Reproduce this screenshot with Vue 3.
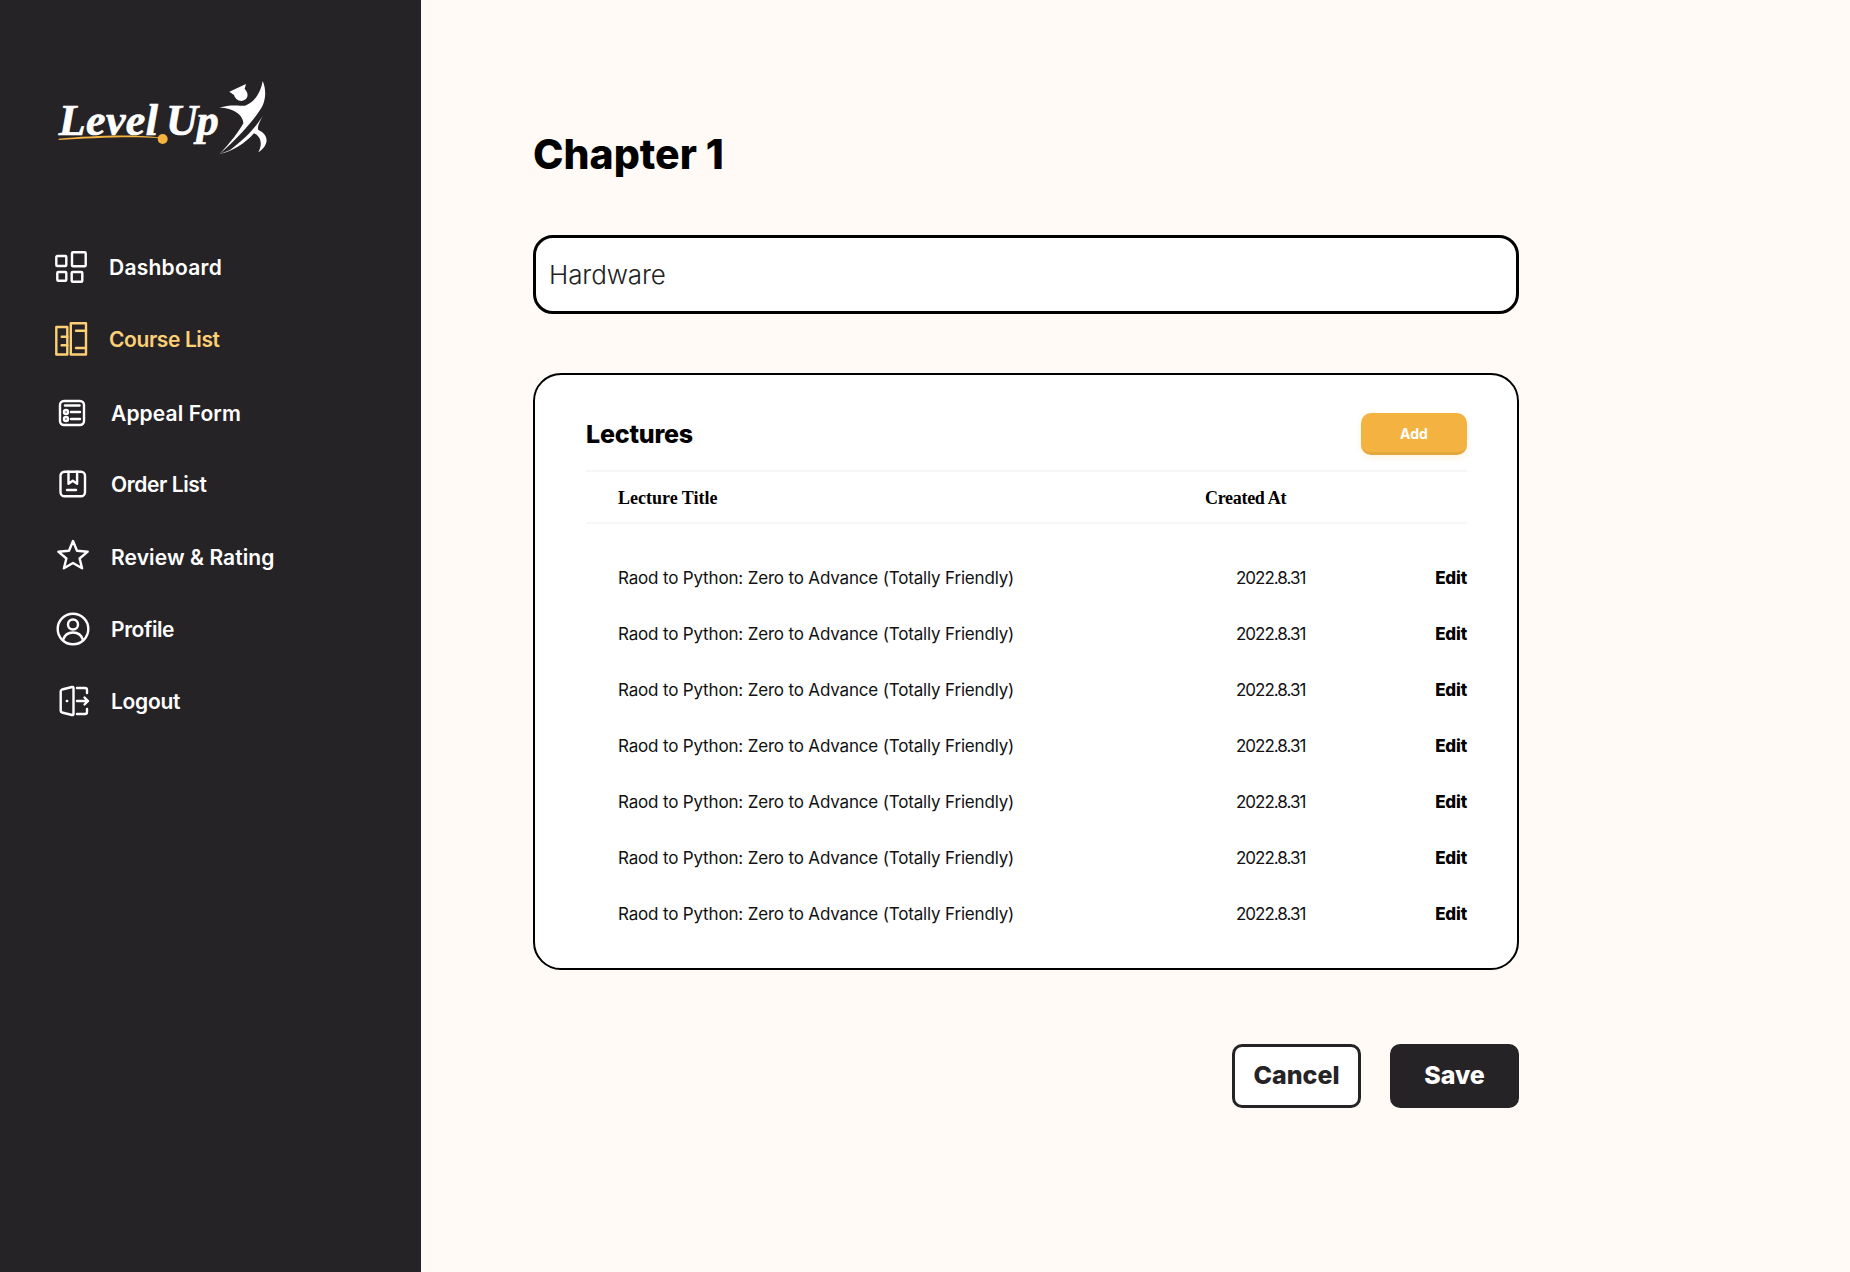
<template>
  <div class="page">
    <aside class="sidebar">
      <svg class="logo" viewBox="0 0 780 360" width="260" height="120">
        <text x="86" y="224" class="logo-text" textLength="298">Level</text>
        <text x="408" y="224" class="logo-text" textLength="158">Up</text>
        <path d="M86 236 C180 228 300 222 385 232 L385 234 C300 228 180 234 86 240 Z" fill="#f4b341" />
        <circle cx="398" cy="237" r="15" fill="#f4b341" />
        <g transform="translate(540 45)" fill="#fff">
          <path d="M58 50 L108 27 L104 42 C118 55 115 75 95 78 C82 78 74 68 72 60 Z" />
          <path d="M28 98 C55 88 85 92 105 92 C130 85 152 55 158 18 C172 50 165 85 150 105 C135 128 100 175 28 238 C60 205 90 165 100 145 C100 120 70 98 28 98 Z" />
          <path d="M158 122 C145 145 120 180 60 225 L28 238 C70 228 105 205 132 175 C150 182 160 205 145 232 C178 210 178 180 145 165 C140 155 150 140 158 122 Z" />
        </g>
      </svg>

      <nav class="nav">
        <a
          v-for="item in navItems"
          :key="item.label"
          class="nav-item"
          :class="{ active: item.active, wide: item.wide }"
          :style="{ marginBottom: item.gap + 'px', letterSpacing: item.track + 'px' }"
        >
          <svg class="nav-icon" viewBox="0 0 36 36" width="36" height="36">
            <path v-for="d in item.paths" :key="d" :d="d" />
          </svg>
          <span>{{ item.label }}</span>
        </a>
      </nav>
    </aside>

    <main class="main">
      <h1>Chapter 1</h1>
      <div class="name-input">Hardware</div>

      <section class="card">
        <div class="card-head">
          <h2>Lectures</h2>
          <button class="add-btn">Add</button>
        </div>
        <div class="table-head">
          <span class="col-title">Lecture Title</span>
          <span class="col-created">Created At</span>
        </div>
        <div class="rows">
          <div v-for="n in 7" :key="n" class="row">
            <span class="col-title">Raod to Python: Zero to Advance (Totally Friendly)</span>
            <span class="col-date">2022.8.31</span>
            <span class="col-edit">Edit</span>
          </div>
        </div>
      </section>

      <div class="actions">
        <button class="cancel-btn">Cancel</button>
        <button class="save-btn">Save</button>
      </div>
    </main>
  </div>
</template>

<script setup>
const navItems = [
  {
    label: 'Dashboard',
    gap: 36,
    track: 0.25,
    paths: [
      'M2.300 7h8a1 1 0 0 1 1 1v8a1 1 0 0 1-1 1h-8a1 1 0 0 1-1-1v-8a1 1 0 0 1 1-1z',
      'M18 3.300h11.700a1 1 0 0 1 1 1v12a1 1 0 0 1-1 1h-11.700a1 1 0 0 1-1-1v-12a1 1 0 0 1 1-1z',
      'M3.300 23h7a1 1 0 0 1 1 1v6.700a1 1 0 0 1-1 1h-7a1 1 0 0 1-1-1v-6.700a1 1 0 0 1 1-1z',
      'M17.700 23h8.600a1 1 0 0 1 1 1v7.700a1 1 0 0 1-1 1h-8.600a1 1 0 0 1-1-1v-7.700a1 1 0 0 1 1-1z'
    ]
  },
  {
    label: 'Course List',
    active: true,
    gap: 38,
    track: -0.4,
    paths: [
      'M1.300 6h11v27.500h-11z',
      'M6.700 15.700h5.600',
      'M6.700 24.300h5.600',
      'M15.800 2.300h15.200v31.200h-15.200z',
      'M21 9.700h10',
      'M21 27h10'
    ]
  },
  {
    label: 'Appeal Form',
    wide: true,
    gap: 35,
    track: 0.1,
    paths: [
      'M8 6h16a4 4 0 0 1 4 4v16a4 4 0 0 1-4 4h-16a4 4 0 0 1-4-4v-16a4 4 0 0 1 4-4z',
      'M9 10.500h14.500',
      'M15 17h9',
      'M15 24h9',
      'M12 17a2 2 0 1 1-4 0a2 2 0 1 1 4 0z',
      'M12 24a2 2 0 1 1-4 0a2 2 0 1 1 4 0z'
    ]
  },
  {
    label: 'Order List',
    wide: true,
    gap: 37,
    track: -0.4,
    paths: [
      'M8.500 5.700h16.500a4 4 0 0 1 4 4v16.600a4 4 0 0 1-4 4h-16.500a4 4 0 0 1-4-4v-16.600a4 4 0 0 1 4-4z',
      'M12.500 5.700v12l4.300-3l4.300 3v-12',
      'M11 24h9'
    ]
  },
  {
    label: 'Review & Rating',
    wide: true,
    gap: 36,
    track: 0.1,
    paths: [
      'M17 2l4 9.800l10.700 .9l-8.100 6.800l2.500 9.800l-9.100-5.300l-9.100 5.300l2.500-9.800l-8.100-6.800l10.700-.9z'
    ]
  },
  {
    label: 'Profile',
    wide: true,
    gap: 36,
    track: -0.4,
    paths: [
      'M32.300 18a15.300 15.300 0 1 1-30.600 0a15.300 15.300 0 1 1 30.600 0z',
      'M22 13.500a5 5 0 1 1-10 0a5 5 0 1 1 10 0z',
      'M7 29c1.500-5 5-7.500 10-7.500s8.500 2.500 10 7.500'
    ]
  },
  {
    label: 'Logout',
    wide: true,
    gap: 0,
    track: -0.3,
    paths: [
      'M6 6.500l10-2.500a1 1 0 0 1 1.500 1v26a1 1 0 0 1-1.500 1l-10-2.500a2 2 0 0 1-1.300-2v-19a2 2 0 0 1 1.300-2z',
      'M21 5h8a2 2 0 0 1 2 2v3',
      'M21 31h8a2 2 0 0 0 2-2v-3',
      'M21 18h11m-3.500-3.500l3.500 3.500l-3.500 3.500',
      'M10.800 18h.4'
    ]
  }
]
</script>

<style scoped>
.page {
  display: flex;
  min-height: 100vh;
  font-family: Inter, "Liberation Sans", sans-serif;
  color: #000;
}
.sidebar {
  width: 421px;
  flex-shrink: 0;
  background: #262326;
  padding-top: 60px;
}
.logo {
  display: block;
  margin-left: 30px;
  margin-bottom: 69px;
}
.logo-text {
  font-family: "Liberation Serif", serif;
  font-style: italic;
  font-weight: 700;
  font-size: 132px;
  fill: #fff;
  stroke: #fff;
  stroke-width: 2;
}
.nav {
  display: flex;
  flex-direction: column;
}
.nav-item {
  display: flex;
  align-items: center;
  gap: 18px;
  height: 36px;
  padding-left: 55px;
  font-size: 21px;
  font-weight: 600;
  color: #fff;
}
.nav-item.wide {
  gap: 19px;
  padding-left: 56px;
}
.nav-item.active {
  color: #fdcf76;
}
.nav-icon {
  fill: none;
  stroke: currentColor;
  stroke-width: 2.4;
  stroke-linejoin: round;
  stroke-linecap: round;
  flex-shrink: 0;
}
.main {
  flex: 1;
  background: #fffaf5;
  padding: 126px 0 0 112px;
}
h1 {
  margin: 0 0 53px;
  font-size: 41px;
  font-weight: 800;
  line-height: 56px;
}
.name-input {
  box-sizing: border-box;
  width: 986px;
  height: 79px;
  padding-left: 13px;
  display: flex;
  align-items: center;
  background: #fff;
  border: 3px solid #000;
  border-radius: 20px;
  font-size: 26px;
  font-weight: 300;
  letter-spacing: -0.1px;
  color: #222;
}
.card {
  box-sizing: border-box;
  width: 986px;
  height: 597px;
  margin-top: 59px;
  padding: 38px 50px 0 51px;
  background: #fff;
  border: 2px solid #000;
  border-radius: 28px;
}
.card-head {
  display: flex;
  justify-content: space-between;
  align-items: center;
  height: 42px;
  margin-bottom: 15px;
}
h2 {
  margin: 0;
  font-size: 25px;
  font-weight: 800;
  letter-spacing: -0.2px;
}
.add-btn {
  width: 106px;
  height: 42px;
  padding-top: 2px;
  border: none;
  border-bottom: 3px solid #e3a73e;
  border-radius: 10px;
  background: #f4b341;
  color: #fff;
  font-family: inherit;
  font-size: 14px;
  font-weight: 700;
  box-shadow: 0 3px 6px rgba(244, 179, 65, 0.15);
}
.table-head {
  display: flex;
  align-items: center;
  height: 54px;
  padding-left: 32px;
  padding-top: 2px;
  border-top: 2px solid #f7f6f4;
  border-bottom: 2px solid #f7f6f4;
  box-sizing: border-box;
  font-family: "Liberation Serif", serif;
  font-size: 18px;
  font-weight: 700;
}
.table-head .col-title {
  width: 587px;
}
.col-created {
  letter-spacing: -0.3px;
}
.rows {
  padding-top: 26px;
}
.row {
  display: flex;
  align-items: center;
  height: 56px;
  padding-left: 32px;
  font-size: 17px;
  font-weight: 400;
  letter-spacing: -0.17px;
  color: #111;
}
.row .col-title {
  width: 618px;
  white-space: nowrap;
}
.col-date {
  width: 181px;
  letter-spacing: -1px;
}
.col-edit {
  flex: 1;
  text-align: right;
  font-weight: 800;
  color: #000;
}
.actions {
  display: flex;
  justify-content: flex-end;
  gap: 29px;
  width: 986px;
  margin-top: 74px;
}
.actions button {
  box-sizing: border-box;
  width: 129px;
  height: 64px;
  padding-bottom: 3px;
  border-radius: 10px;
  font-family: inherit;
  font-size: 25px;
  font-weight: 800;
}
.cancel-btn {
  background: #fff;
  border: 3px solid #262326;
  color: #262326;
}
.save-btn {
  background: #262326;
  border: none;
  color: #fff;
}
</style>
